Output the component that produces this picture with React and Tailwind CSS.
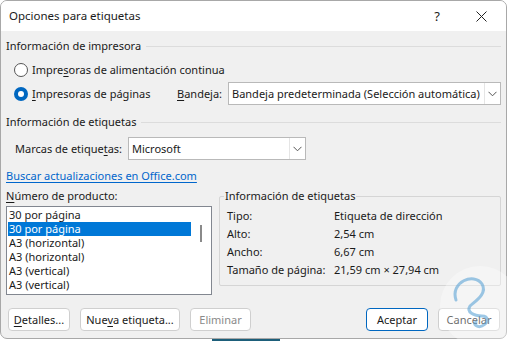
import React from 'react';

const font = { fontFamily: '"Segoe UI", "Noto Sans", sans-serif' };

function U({ children }) {
  return <span className="underline underline-offset-2">{children}</span>;
}

function Chevron() {
  return (
    <svg width="9" height="6" viewBox="0 0 9 6" fill="none">
      <path d="M0.5 0.8 L4.5 4.8 L8.5 0.8" stroke="#555" strokeWidth="1" />
    </svg>
  );
}

function Select({ value, className }) {
  return (
    <div className={`flex h-[23px] items-center border border-[#b9b9b9] bg-white ${className}`}>
      <span className="flex-1 truncate pl-[3px]">{value}</span>
      <span className="flex h-full w-[16px] items-center justify-center border-l border-[#e5e5e5]">
        <Chevron />
      </span>
    </div>
  );
}

function SectionTitle({ children }) {
  return (
    <div className="flex items-center gap-[5px]">
      <span>{children}</span>
      <span className="h-px flex-1 bg-[#dcdcdc]" />
    </div>
  );
}

function Radio({ checked }) {
  return checked ? (
    <span className="flex h-[14px] w-[14px] items-center justify-center rounded-full bg-[#0067c0]">
      <span className="h-[6px] w-[6px] rounded-full bg-white" />
    </span>
  ) : (
    <span className="h-[14px] w-[14px] rounded-full border border-[#555] bg-white" />
  );
}

function Btn({ children, className = '', primary, disabled }) {
  return (
    <div
      className={`flex h-[23px] items-center justify-center rounded-[4px] border bg-white ${
        primary ? 'border-[#0067c0]' : 'border-[#cfcfcf]'
      } ${disabled ? 'text-[#8a8a8a]' : 'text-[#1a1a1a]'} ${className}`}
    >
      {children}
    </div>
  );
}

export default function App() {
  const items = ['30 por página', '30 por página', 'A3 (horizontal)', 'A3 (horizontal)', 'A3 (vertical)', 'A3 (vertical)'];
  const info = [
    ['Tipo:', 'Etiqueta de dirección'],
    ['Alto:', '2,54 cm'],
    ['Ancho:', '6,67 cm'],
    ['Tamaño de página:', '21,59 cm × 27,94 cm'],
  ];

  return (
    <div className="relative h-[341px] w-[507px] overflow-hidden whitespace-nowrap bg-white text-[11px] leading-[14px] text-[#1a1a1a]" style={font}>
      <div className="flex h-[339px] flex-col overflow-hidden rounded-[7px] border border-[#a8a8a8] bg-[#f0f0f0]">
        {/* title bar */}
        <div className="flex h-[30px] shrink-0 items-center bg-white pl-[8px]">
          <span className="flex-1 text-[11.5px]">Opciones para etiquetas</span>
          <span className="w-[46px] text-center text-[13px]">?</span>
          <span className="flex w-[46px] justify-center pr-[3px]">
            <svg width="11" height="11" viewBox="0 0 11 11">
              <path d="M0.5 0.5 L10.5 10.5 M10.5 0.5 L0.5 10.5" stroke="#222" strokeWidth="1" />
            </svg>
          </span>
        </div>

        <div className="flex flex-1 flex-col px-[5px] pt-[8px]">
          <SectionTitle>Información de impresora</SectionTitle>
          <div className="mt-[10px] flex items-center gap-[4px] pl-[8px]">
            <Radio />
            <span>Impre<U>s</U>oras de alimentación continua</span>
          </div>
          <div className="mt-[5px] flex items-center pl-[8px]">
            <Radio checked />
            <span className="ml-[4px] w-[145px]"><U>I</U>mpresoras de páginas</span>
            <span className="w-[51px]"><U>B</U>andeja:</span>
            <Select value="Bandeja predeterminada (Selección automática)" className="w-[273px]" />
          </div>

          <div className="mt-[10px]">
            <SectionTitle>Información de etiquetas</SectionTitle>
          </div>
          <div className="mt-[8px] flex items-center pl-[9px]">
            <span className="w-[113px]">Marcas de etique<U>t</U>as:</span>
            <Select value="Microsoft" className="w-[178px]" />
          </div>

          <div className="mt-[9px] text-[#0066cc] underline underline-offset-2">Buscar actualizaciones en Office.com</div>

          <div className="mt-[6px] flex gap-[7px]">
            <div className="flex w-[206px] flex-col">
              <span><U>N</U>úmero de producto:</span>
              <div className="relative mt-[3px] h-[89px] border border-[#828790] bg-white px-px pt-px">
                {items.map((it, i) => (
                  <div
                    key={i}
                    className={`h-[14px] w-[183px] pl-[1px] ${i === 1 ? 'bg-[#0078d7] text-white' : ''}`}
                  >
                    {it}
                  </div>
                ))}
                <span className="absolute left-[193px] top-[18px] h-[17px] w-[2px] bg-[#8a8a8a]" />
              </div>
            </div>

            <div className="relative mt-[7px] flex h-[90px] flex-1 flex-col gap-[4px] rounded-[2px] border border-[#d5d5d5] pl-[7px] pt-[12px]">
              <span className="absolute -top-[8px] left-[4px] bg-[#f0f0f0] px-px">Información de etiquetas</span>
              {info.map(([k, v]) => (
                <div key={k} className="flex">
                  <span className="w-[107px]">{k}</span>
                  <span>{v}</span>
                </div>
              ))}
            </div>
          </div>

          <div className="mt-[13px] flex pl-[2px] pr-[1px]">
            <Btn className="w-[62px]"><span><U>D</U>etalles...</span></Btn>
            <Btn className="ml-[10px] w-[100px]"><span>Nue<U>v</U>a etiqueta...</span></Btn>
            <Btn className="ml-[10px] w-[61px]" disabled>Eliminar</Btn>
            <div className="flex-1" />
            <Btn className="w-[62px]" primary>Aceptar</Btn>
            <Btn className="ml-[10px] w-[62px]">Cancelar</Btn>
          </div>
        </div>
      </div>

      {/* watermark */}
      <div className="pointer-events-none absolute left-[440px] top-[266px] h-[80px] w-[80px] rounded-full bg-white/35">
        <svg width="80" height="80" viewBox="0 0 80 80" fill="none">
          <path
            d="M16 34 C10 16 34 6 42 18 C48 28 34 36 30 40 C26 46 34 50 42 50 C48 50 50 56 42 60 C38 62 32 58 36 56"
            stroke="#5ba3d6"
            strokeWidth="3"
            strokeLinecap="round"
            opacity="0.6"
          />
        </svg>
      </div>
      <div className="absolute bottom-0 left-[212px] h-[2px] w-[68px] bg-[#1d5f7a]" />
    </div>
  );
}
